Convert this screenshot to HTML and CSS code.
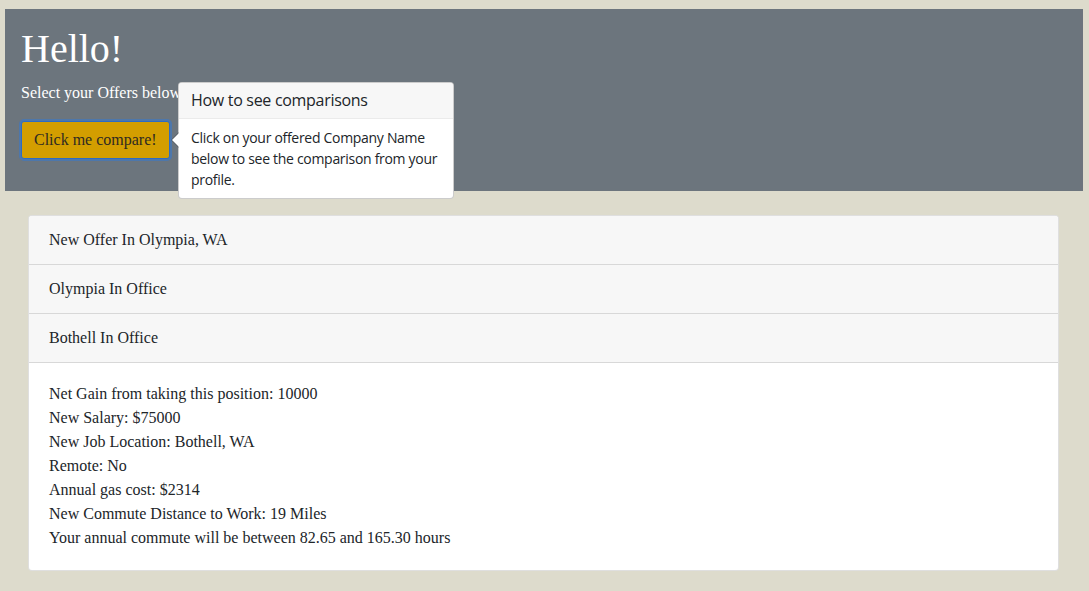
FILE: index.html
```html
<!DOCTYPE html>
<html>
<head>
<meta charset="utf-8">
<link rel="stylesheet" href="styles.css">
</head>
<body>
<div class="hero">
  <h1 class="hero-title">Hello!</h1>
  <p class="hero-lead">Select your Offers below</p>
  <button class="btn-compare">Click me compare!</button>
</div>

<div class="popover">
  <div class="popover-arrow"></div>
  <div class="popover-header">How to see comparisons</div>
  <div class="popover-body">Click on your offered Company Name below to see the comparison from your profile.</div>
</div>

<div class="card">
  <div class="card-row">New Offer In Olympia, WA</div>
  <div class="card-row">Olympia In Office</div>
  <div class="card-row">Bothell In Office</div>
  <div class="card-body">
    <div>Net Gain from taking this position: 10000</div>
    <div>New Salary: $75000</div>
    <div>New Job Location: Bothell, WA</div>
    <div>Remote: No</div>
    <div>Annual gas cost: $2314</div>
    <div>New Commute Distance to Work: 19 Miles</div>
    <div>Your annual commute will be between 82.65 and 165.30 hours</div>
  </div>
</div>
</body>
</html>
```

FILE: styles.css
```css
html, body {
  margin: 0;
  padding: 0;
}
body {
  background: #dddbcc;
  font-family: "Liberation Serif", "Times New Roman", serif;
  font-size: 16px;
  line-height: 1.5;
  color: #212529;
  padding: 9px 6px 20px 5px;
  position: relative;
}
.hero {
  background: #6c757d;
  padding: 16px 16px 32px 16px;
  color: #fff;
}
.hero-title {
  margin: 0 0 8px 0;
  font-size: 40px;
  line-height: 1.2;
  font-weight: 400;
}
.hero-lead {
  margin: 0 0 16px 0;
}
.btn-compare {
  font-family: "Liberation Serif", "Times New Roman", serif;
  font-size: 16px;
  line-height: 1.5;
  padding: 6px 12px;
  background: #d39e00;
  color: #2e2a22;
  border: 1px solid #2d6bc4;
  border-radius: 3px;
  box-shadow: 0 0 0 2px rgba(52, 120, 210, 0.55);
  cursor: pointer;
}
.popover {
  position: absolute;
  left: 178px;
  top: 82px;
  width: 274px;
  background: #fff;
  border: 1px solid rgba(0, 0, 0, 0.2);
  border-radius: 4px;
  font-family: "Open Sans", "Noto Sans", sans-serif;
  font-size: 14px;
  line-height: 21px;
  letter-spacing: -0.3px;
  color: #212529;
}
.popover-arrow {
  position: absolute;
  left: -8px;
  top: 49px;
  width: 0;
  height: 0;
  border-top: 8px solid transparent;
  border-bottom: 8px solid transparent;
  border-right: 8px solid rgba(0, 0, 0, 0.25);
}
.popover-arrow::after {
  content: "";
  position: absolute;
  left: 1px;
  top: -8px;
  border-top: 8px solid transparent;
  border-bottom: 8px solid transparent;
  border-right: 8px solid #fff;
}
.popover-header {
  background: #f7f7f7;
  border-bottom: 1px solid #ebebeb;
  border-radius: 3px 3px 0 0;
  padding: 8px 12px;
  font-size: 16px;
  line-height: 19px;
  font-weight: 500;
  letter-spacing: -0.3px;
}
.popover-body {
  padding: 8px 12px;
}
.card {
  margin: 24px 24px 0 23px;
  background: #fff;
  border: 1px solid rgba(0, 0, 0, 0.125);
  border-radius: 4px;
  overflow: hidden;
}
.card-row {
  background: #f7f7f7;
  padding: 12px 20px;
  border-bottom: 1px solid rgba(0, 0, 0, 0.125);
}
.card-body {
  padding: 19px 20px 20px 20px;
}
```
